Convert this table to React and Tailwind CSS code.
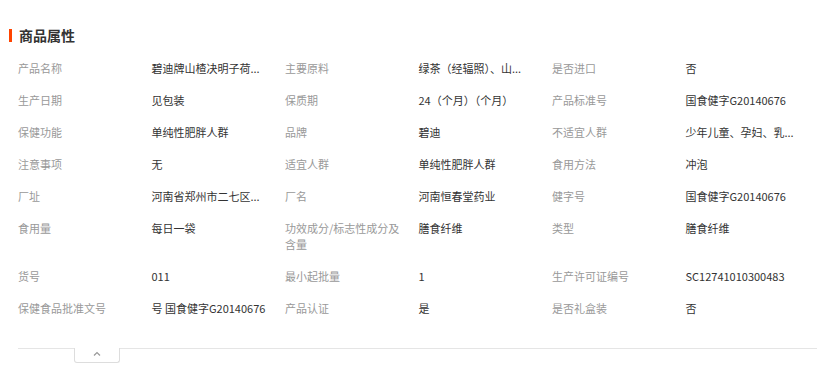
import React from "react";

const rows = [
  [["产品名称", "碧迪牌山楂决明子荷..."], ["主要原料", "绿茶（经辐照）、山..."], ["是否进口", "否"]],
  [["生产日期", "见包装"], ["保质期", "24（个月）（个月）"], ["产品标准号", "国食健字G20140676"]],
  [["保健功能", "单纯性肥胖人群"], ["品牌", "碧迪"], ["不适宜人群", "少年儿童、孕妇、乳..."]],
  [["注意事项", "无"], ["适宜人群", "单纯性肥胖人群"], ["食用方法", "冲泡"]],
  [["厂址", "河南省郑州市二七区..."], ["厂名", "河南恒春堂药业"], ["健字号", "国食健字G20140676"]],
  [["食用量", "每日一袋"], ["功效成分/标志性成分及含量", "膳食纤维"], ["类型", "膳食纤维"]],
  [["货号", "011"], ["最小起批量", "1"], ["生产许可证编号", "SC12741010300483"]],
  [["保健食品批准文号", "号 国食健字G20140676"], ["产品认证", "是"], ["是否礼盒装", "否"]],
];

export default function App() {
  return (
    <div className="w-[828px] h-[382px] bg-white font-['Noto_Sans_CJK_SC','Liberation_Sans',sans-serif] text-[11px] leading-4">
      <div className="pt-[26px] pl-[9px] flex items-center h-[44px] box-border">
        <span className="w-[3px] h-[13px] bg-[#ff4400]" />
        <h2 className="ml-[7px] text-[14px] leading-[18px] font-bold text-[#333]">商品属性</h2>
      </div>

      <div className="ml-[18px] mt-[8px] w-[801px] grid grid-cols-6">
        {rows.map((row, i) =>
          row.map(([label, value], j) => (
            <React.Fragment key={`${i}-${j}`}>
              <div className="py-2 pr-[14px] text-[#999] break-all">{label}</div>
              <div className="py-2 pr-2 text-[#333] whitespace-nowrap">{value}</div>
            </React.Fragment>
          ))
        )}
      </div>

      <div className="ml-[18px] mt-[24px] w-[799px] border-t border-[#e5e5e5]">
        <div className="ml-[56px] -mt-px w-[46px] h-[15px] border border-t-0 border-[#ddd] rounded-b-[3px] bg-white flex justify-center pt-[3px]">
          <svg width="8" height="5" viewBox="0 0 8 5" fill="none">
            <path d="M1 4.5L4 1.5L7 4.5" stroke="#999" strokeWidth="1.2" />
          </svg>
        </div>
      </div>
    </div>
  );
}
